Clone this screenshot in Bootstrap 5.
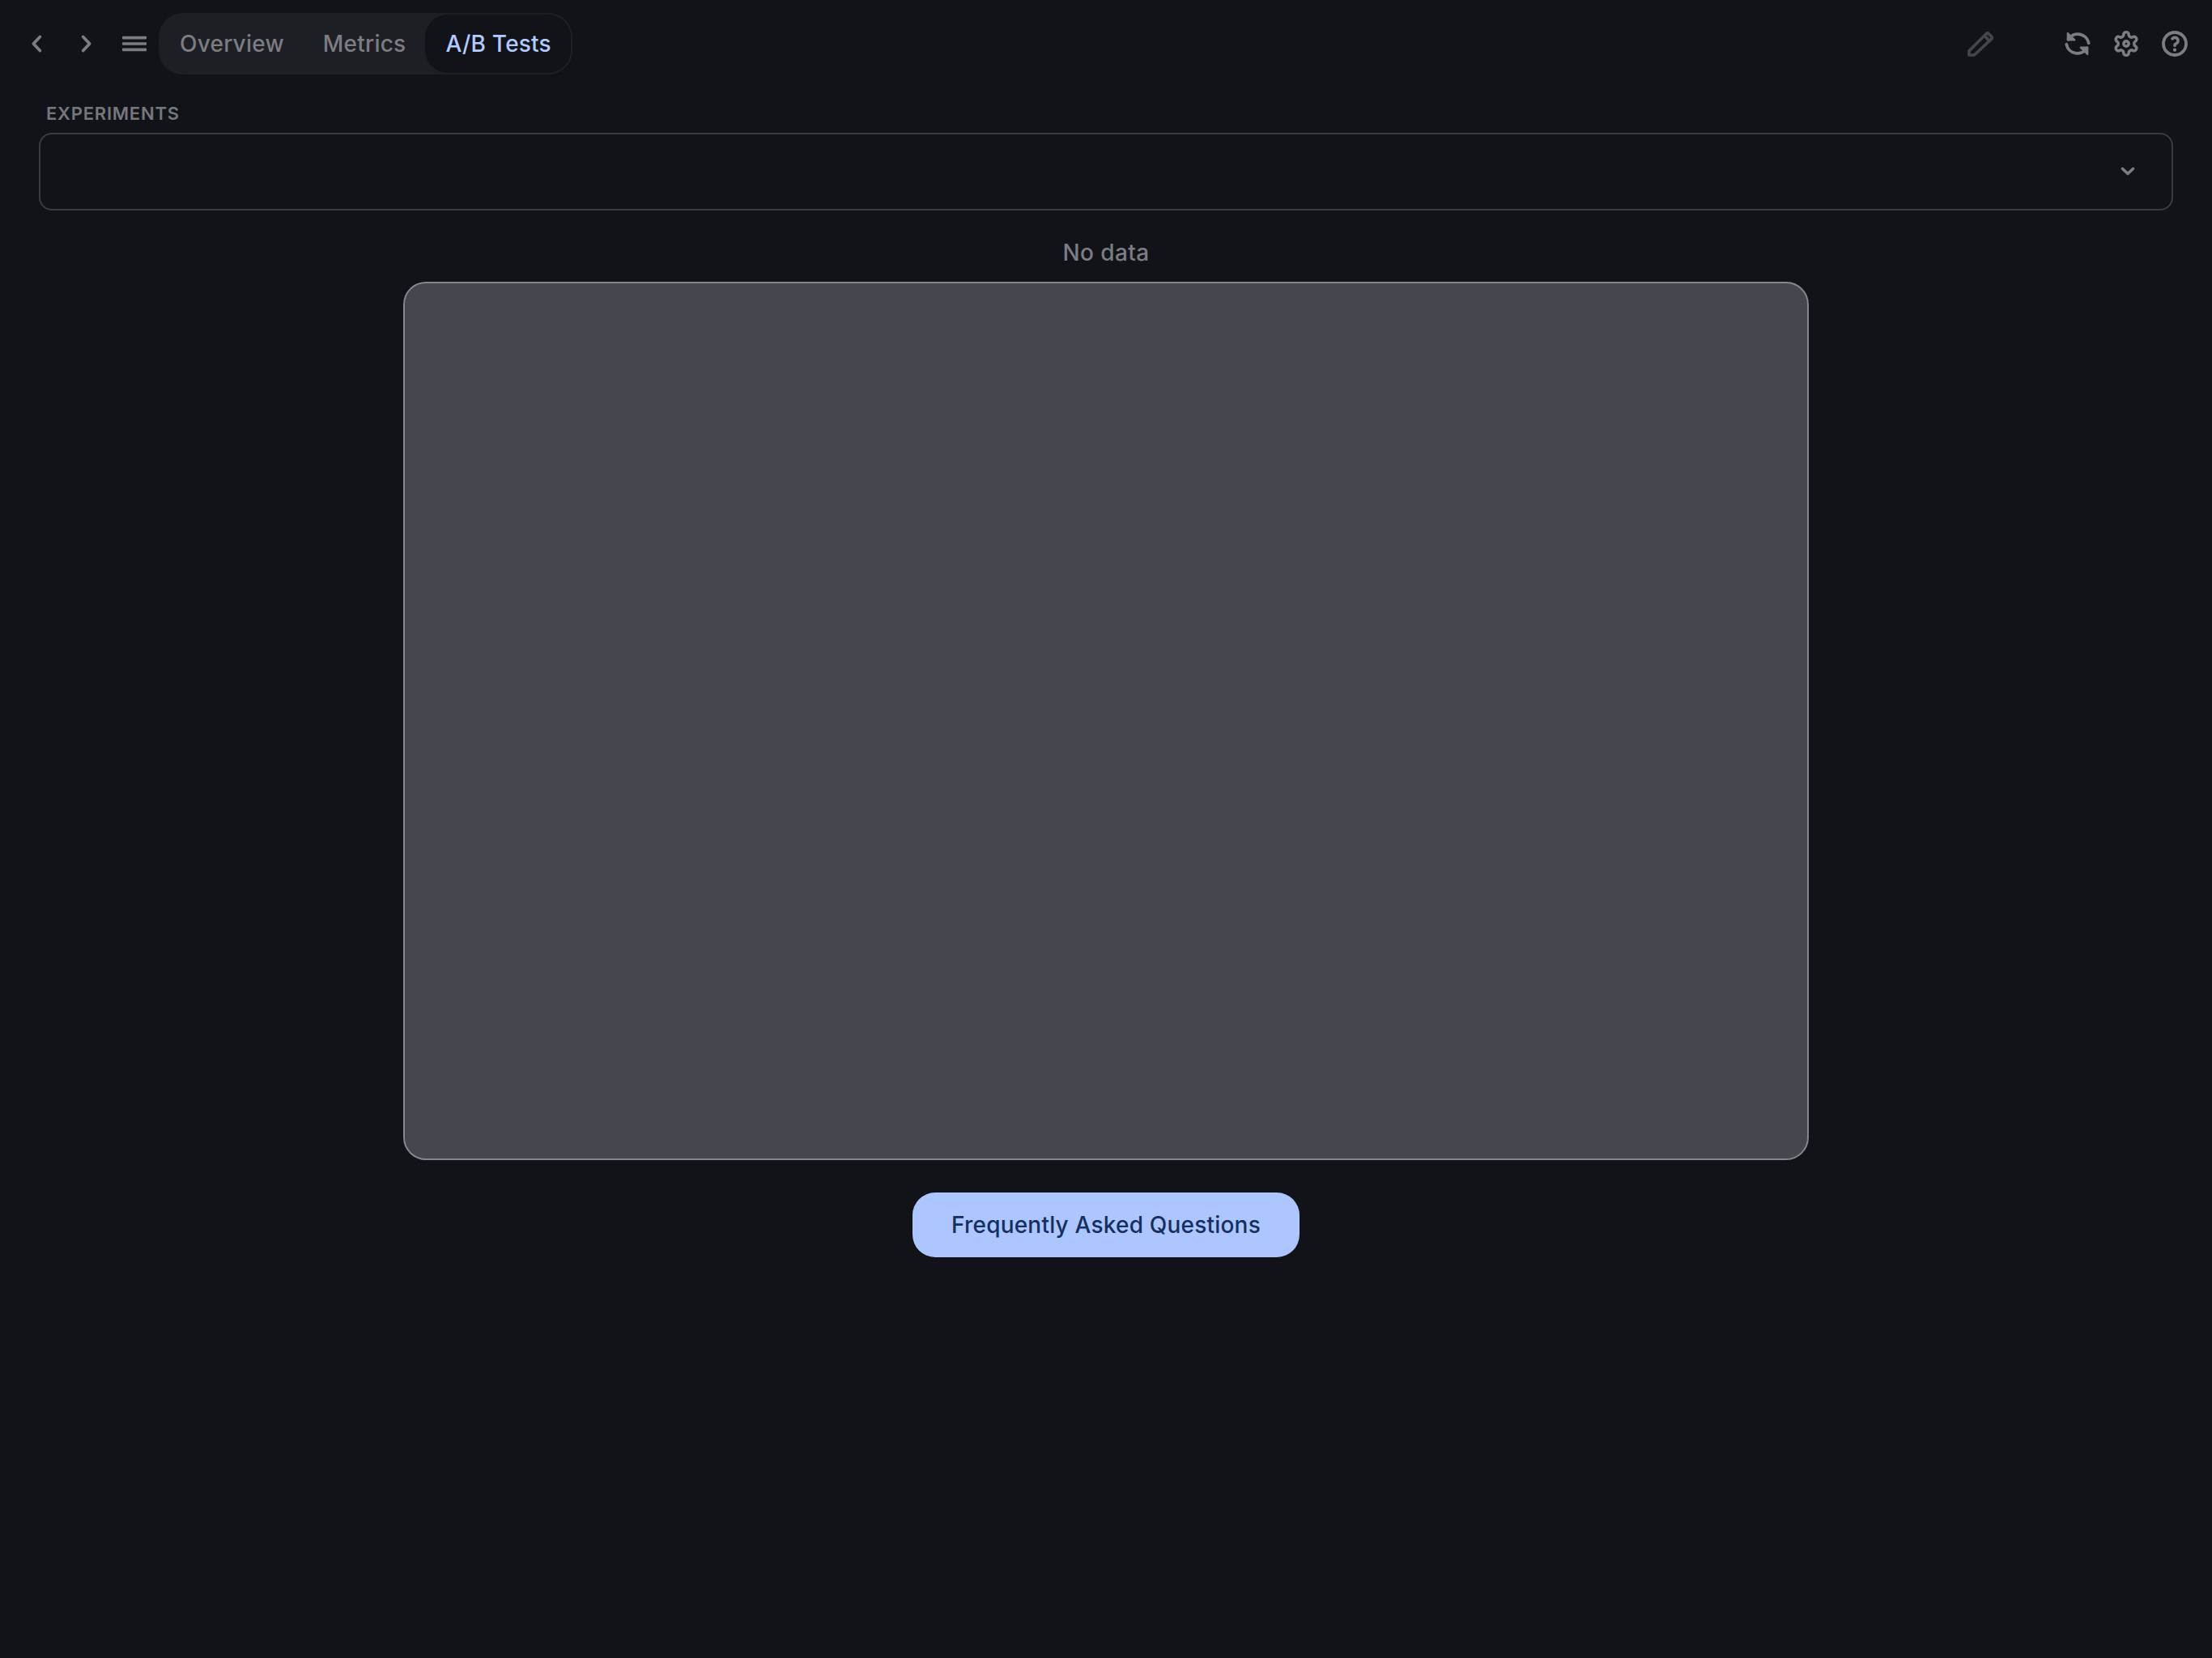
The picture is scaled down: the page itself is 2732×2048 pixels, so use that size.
<!DOCTYPE html>
<html lang="en" data-bs-theme="dark">
<head>
<meta charset="utf-8">
<title>A/B Tests</title>
<link href="https://cdn.jsdelivr.net/npm/bootstrap@5.3.0/dist/css/bootstrap.min.css" rel="stylesheet">
<style>
html, body { height: 100%; }
body { background: #121318; font-family: "Inter", "Liberation Sans", sans-serif; }
.top-bar { padding: 16px 16px 0 16px; height: 92px; }
.icon-btn { width: 60px; height: 60px; background: none; border: 0; padding: 0; color: #7c7d83; }
.icon-btn svg { width: 32px; height: 32px; display: block; }
.icon-btn.dim { color: #44454b; }
.icon-gap { width: 60px; }
.tab-group { height: 76px; background: #1e1f25; border-radius: 30px; padding: 2px; }
.tab-item { height: 72px; display: flex; align-items: center; padding: 0 24px; font-size: 28px; font-weight: 450; letter-spacing: .22px; color: #7c7d83; border-radius: 28px; }
.tab-item.on { background: #121318; color: #b3caff; box-shadow: 0 0 0 2px #1e1f25; padding: 0 24px 0 25px; }
.page-body { padding: 0 48px; }
.field-label { font-size: 22px; line-height: 28px; font-weight: 600; letter-spacing: .78px; color: #76777d; margin: 34px 0 0 9px; height: 38px; }
.select-box { height: 96px; border: 2px solid #3a3b41; border-radius: 16px; padding-right: 45px; }
.select-box svg { width: 18px; height: 12px; display: block; color: #7c7d83; }
.no-data { font-size: 28px; line-height: 36px; font-weight: 450; letter-spacing: .4px; color: #7c7d83; margin-top: 34px; }
.chart-area { width: 1736px; height: 1085px; background: #44474e; border: 2px solid #85878f; border-radius: 28px; margin-top: 18px; }
.faq-btn { width: 478px; height: 80px; margin-top: 40px; background: #adc6ff; color: #152f5f; border: 0; border-radius: 28px; font-size: 28px; font-weight: 500; letter-spacing: .2px; padding: 0; }
.faq-btn:hover { background: #adc6ff; color: #152f5f; }
</style>
</head>
<body>
<header class="top-bar d-flex align-items-center">
  <button class="icon-btn d-flex align-items-center justify-content-center" aria-label="Back">
    <svg viewBox="0 0 24 24" fill="none" stroke="currentColor" stroke-width="2.800" stroke-linecap="round" stroke-linejoin="round"><path d="M14.500 5.600 8.500 12l6 6.400"/></svg>
  </button>
  <button class="icon-btn d-flex align-items-center justify-content-center" aria-label="Forward">
    <svg viewBox="0 0 24 24" fill="none" stroke="currentColor" stroke-width="2.800" stroke-linecap="round" stroke-linejoin="round"><path d="M9.500 5.600l6 6.400-6 6.400"/></svg>
  </button>
  <button class="icon-btn d-flex align-items-center justify-content-center" aria-label="Menu">
    <svg viewBox="0 0 24 24" fill="currentColor"><rect x=".75" y="5" width="22.500" height="2.800" rx=".6"/><rect x=".75" y="10.600" width="22.500" height="2.800" rx=".6"/><rect x=".75" y="16.200" width="22.500" height="2.800" rx=".6"/></svg>
  </button>
  <nav class="tab-group d-flex align-items-center">
    <span class="tab-item">Overview</span>
    <span class="tab-item">Metrics</span>
    <span class="tab-item on">A/B Tests</span>
  </nav>
  <div class="ms-auto d-flex align-items-center">
    <button class="icon-btn dim d-flex align-items-center justify-content-center" aria-label="Edit">
      <svg viewBox="0 0 24 24" fill="none" stroke="currentColor" stroke-width="2.800" stroke-linejoin="round" stroke-linecap="round"><path d="M1.500 22.500v-3.800L17.800 2.400a1 1 0 0 1 1.400 0l3.400 3.400a1 1 0 0 1 0 1.400L6.300 22.500z"/><path d="m16.500 5.500 2.800 2.800"/></svg>
    </button>
    <span class="icon-gap"></span>
    <button class="icon-btn d-flex align-items-center justify-content-center" aria-label="Refresh">
      <svg viewBox="1.500 1.500 21 21" fill="none" stroke="currentColor" stroke-width="2.500" stroke-linecap="round" stroke-linejoin="round"><path d="M21 11.500a9 9 0 0 0-16.500-3"/><path d="M4 3.500V9h5.500z" fill="currentColor" stroke-width="1.500"/><path d="M3 12.500a9 9 0 0 0 16.500 3"/><path d="M20 20.500V15h-5.500z" fill="currentColor" stroke-width="1.500"/></svg>
    </button>
    <button class="icon-btn d-flex align-items-center justify-content-center" aria-label="Settings">
      <svg viewBox="0.750 0.750 22.500 22.500" fill="none" stroke="currentColor" stroke-width="2.500" stroke-linecap="round" stroke-linejoin="round"><path d="M12.220 2h-.44a2 2 0 0 0-2 2v.18a2 2 0 0 1-1 1.730l-.43.25a2 2 0 0 1-2 0l-.15-.08a2 2 0 0 0-2.730.73l-.22.38a2 2 0 0 0 .73 2.730l.15.1a2 2 0 0 1 1 1.720v.51a2 2 0 0 1-1 1.740l-.15.09a2 2 0 0 0-.73 2.730l.22.38a2 2 0 0 0 2.730.73l.15-.08a2 2 0 0 1 2 0l.43.25a2 2 0 0 1 1 1.730V20a2 2 0 0 0 2 2h.44a2 2 0 0 0 2-2v-.18a2 2 0 0 1 1-1.730l.43-.25a2 2 0 0 1 2 0l.15.08a2 2 0 0 0 2.730-.73l.22-.39a2 2 0 0 0-.73-2.730l-.15-.08a2 2 0 0 1-1-1.740v-.5a2 2 0 0 1 1-1.740l.15-.09a2 2 0 0 0 .73-2.730l-.22-.38a2 2 0 0 0-2.730-.73l-.15.08a2 2 0 0 1-2 0l-.43-.25a2 2 0 0 1-1-1.730V4a2 2 0 0 0-2-2z"/><circle cx="12" cy="12" r="2.200"/></svg>
    </button>
    <button class="icon-btn d-flex align-items-center justify-content-center" aria-label="Help">
      <svg viewBox="1.500 1.500 21 21" fill="none" stroke="currentColor" stroke-width="2.500" stroke-linecap="round" stroke-linejoin="round"><circle cx="12" cy="12" r="9.200"/><path d="M12 17v.01" stroke-width="2.800"/><path d="M12 13.500a1.500 1.500 0 0 1 1-1.500 2.600 2.600 0 1 0-3-4" stroke-width="2.400"/></svg>
    </button>
  </div>
</header>
<main class="page-body">
  <div class="field-label">EXPERIMENTS</div>
  <div class="select-box d-flex align-items-center justify-content-end">
    <svg viewBox="0 0 18 12" fill="none" stroke="currentColor" stroke-width="3.600" stroke-linecap="round" stroke-linejoin="round"><path d="M2.500 2.500 9 8.500l6.500-6"/></svg>
  </div>
  <div class="d-flex flex-column align-items-center">
    <div class="no-data text-center">No data</div>
    <div class="chart-area"></div>
    <button class="btn faq-btn">Frequently Asked Questions</button>
  </div>
</main>
<script src="https://cdn.jsdelivr.net/npm/bootstrap@5.3.0/dist/js/bootstrap.bundle.min.js"></script>
</body>
</html>
